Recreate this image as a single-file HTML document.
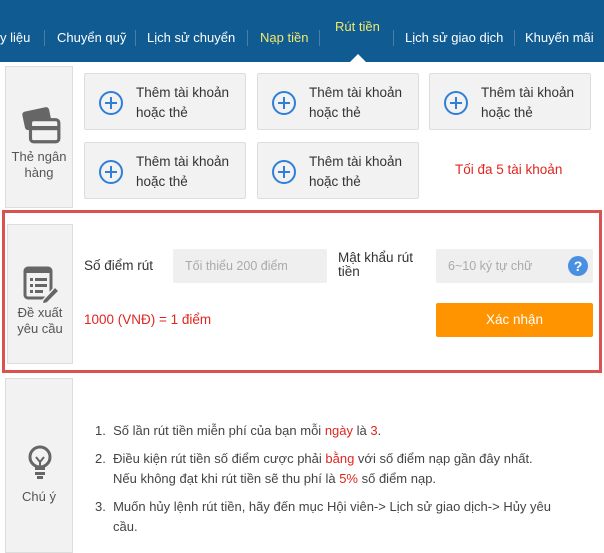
<!DOCTYPE html>
<html><head><meta charset="utf-8"><style>
*{margin:0;padding:0;box-sizing:border-box}
body{width:604px;height:549px;background:#fff;font-family:"Liberation Sans",Arial,sans-serif;position:relative;overflow:hidden;color:#333}
.nav{position:absolute;left:0;top:0;width:604px;height:62px;background:#0f5b92}
.nav span{position:absolute;top:30px;font-size:13px;color:#fff;white-space:nowrap}
.nav i{position:absolute;top:30px;width:1px;height:16px;background:#4b7fa8}
.y{color:#f2e86d!important}
.tri{position:absolute;left:350px;top:54px;width:0;height:0;border-left:8px solid transparent;border-right:8px solid transparent;border-bottom:8px solid #fff}
.side{position:absolute;background:#f2f2f2;border:1px solid #ddd;text-align:center;font-size:13px;color:#555;line-height:16px}
.btn{position:absolute;width:162px;height:57px;background:#f2f2f2;border:1px solid #ddd;border-radius:2px;font-size:13.5px;color:#333;line-height:20px}
.btn .c{position:absolute;left:14px;top:17px;width:24px;height:24px;border:2px solid #2f7fd8;border-radius:50%}
.btn .c:before{content:"";position:absolute;left:4px;top:9px;width:12px;height:2px;background:#2f7fd8}
.btn .c:after{content:"";position:absolute;left:9px;top:4px;width:2px;height:12px;background:#2f7fd8}
.btn div.t{position:absolute;left:51px;top:9px}
.red{color:#e0261f}
.inp{position:absolute;background:#efefef;border-radius:2px;font-size:12.5px;color:#aaa;padding-left:12px;line-height:34px}
ol{position:absolute;left:95px;top:421px;font-size:13px;color:#444;line-height:20px;list-style:none;width:510px}
ol li{margin-bottom:8px;padding-left:18px;text-indent:-18px;white-space:nowrap}
</style></head><body>
<div class="nav">
<span style="left:0">y liệu</span><i style="left:44px"></i>
<span style="left:57px">Chuyển quỹ</span><i style="left:135px"></i>
<span style="left:147px">Lịch sử chuyển</span><i style="left:247px"></i>
<span class="y" style="left:260px">Nạp tiền</span><i style="left:319px"></i>
<span class="y" style="left:335px;top:19px">Rút tiền</span><i style="left:393px"></i>
<span style="left:405px">Lịch sử giao dịch</span><i style="left:514px"></i>
<span style="left:525px">Khuyến mãi</span>
<div class="tri"></div>
</div>

<div class="side" style="left:5px;top:66px;width:68px;height:142px">
<svg style="position:absolute;left:14px;top:38px" width="42" height="42" viewBox="0 0 40 40"><rect x="3" y="4" width="26" height="18" rx="3" fill="#666" transform="rotate(-12 16 12)"/><rect x="10" y="14" width="27" height="21" rx="3" fill="#f2f2f2" stroke="#666" stroke-width="3"/><rect x="11" y="20" width="25" height="4" fill="#666"/></svg>
<div style="position:absolute;top:82px;width:100%">Thẻ ngân<br>hàng</div></div>

<div class="btn" style="left:84px;top:73px"><div class="c"></div><div class="t">Thêm tài khoản<br>hoặc thẻ</div></div>
<div class="btn" style="left:257px;top:73px"><div class="c"></div><div class="t">Thêm tài khoản<br>hoặc thẻ</div></div>
<div class="btn" style="left:429px;top:73px"><div class="c"></div><div class="t">Thêm tài khoản<br>hoặc thẻ</div></div>
<div class="btn" style="left:84px;top:142px"><div class="c"></div><div class="t">Thêm tài khoản<br>hoặc thẻ</div></div>
<div class="btn" style="left:257px;top:142px"><div class="c"></div><div class="t">Thêm tài khoản<br>hoặc thẻ</div></div>
<div class="red" style="position:absolute;left:455px;top:162px;font-size:13.5px">Tối đa 5 tài khoản</div>

<div style="position:absolute;left:2px;top:210px;width:600px;height:163px;border:3px solid #d9534f"></div>
<div class="side" style="left:7px;top:224px;width:66px;height:140px">
<svg style="position:absolute;left:13px;top:40px" width="40" height="40" viewBox="0 0 40 40"><rect x="4" y="3" width="26" height="30" rx="3" fill="none" stroke="#666" stroke-width="3"/><rect x="4" y="3" width="26" height="5" fill="#666"/><rect x="9" y="13" width="3" height="3" fill="#666"/><rect x="14" y="13" width="12" height="3" fill="#666"/><rect x="9" y="19" width="3" height="3" fill="#666"/><rect x="14" y="19" width="12" height="3" fill="#666"/><rect x="9" y="25" width="3" height="3" fill="#666"/><rect x="14" y="25" width="8" height="3" fill="#666"/><path d="M22 35 L34 22 L38 26 L26 38 L21 39Z" fill="#666" stroke="#f2f2f2" stroke-width="1.5"/></svg>
<div style="position:absolute;top:80px;width:100%">Đề xuất<br>yêu cầu</div></div>
<div style="position:absolute;left:84px;top:258px;font-size:13.5px">Số điểm rút</div>
<div class="inp" style="left:173px;top:249px;width:154px;height:34px">Tối thiểu 200 điểm</div>
<div style="position:absolute;left:338px;top:251px;font-size:13.5px;line-height:14px">Mật khẩu rút<br>tiền</div>
<div class="inp" style="left:436px;top:249px;width:157px;height:34px">6~10 ký tự chữ</div>
<div style="position:absolute;left:568px;top:256px;width:20px;height:20px;border-radius:50%;background:#4a90e2;color:#fff;font-weight:bold;font-size:14px;text-align:center;line-height:20px">?</div>
<div class="red" style="position:absolute;left:84px;top:312px;font-size:13.5px">1000 (VNĐ) = 1 điểm</div>
<div style="position:absolute;left:436px;top:303px;width:157px;height:34px;background:#ff9300;border-radius:2px;color:#fff;font-size:13.5px;text-align:center;line-height:34px">Xác nhận</div>

<div class="side" style="left:5px;top:378px;width:68px;height:175px">
<svg style="position:absolute;left:20px;top:66px" width="28" height="36" viewBox="0 0 28 36"><circle cx="14" cy="12" r="10" fill="none" stroke="#666" stroke-width="3"/><path d="M10 12 l4 5 l4 -5 M14 17 v5" stroke="#666" stroke-width="2" fill="none"/><rect x="9" y="22" width="10" height="3" fill="#666"/><rect x="9" y="27" width="10" height="3" fill="#666"/><rect x="11" y="31" width="6" height="3" fill="#666"/></svg>
<div style="position:absolute;top:110px;width:100%">Chú ý</div></div>
<ol>
<li>1.&nbsp; Số lần rút tiền miễn phí của bạn mỗi <span class="red">ngày</span> là <span class="red">3</span>.</li>
<li>2.&nbsp; Điều kiện rút tiền số điểm cược phải <span class="red">bằng</span> với số điểm nạp gần đây nhất.<br>Nếu không đạt khi rút tiền sẽ thu phí là <span class="red">5%</span> số điểm nạp.</li>
<li>3.&nbsp; Muốn hủy lệnh rút tiền, hãy đến mục Hội viên-&gt; Lịch sử giao dịch-&gt; Hủy yêu<br>cầu.</li>
</ol>
</body></html>
